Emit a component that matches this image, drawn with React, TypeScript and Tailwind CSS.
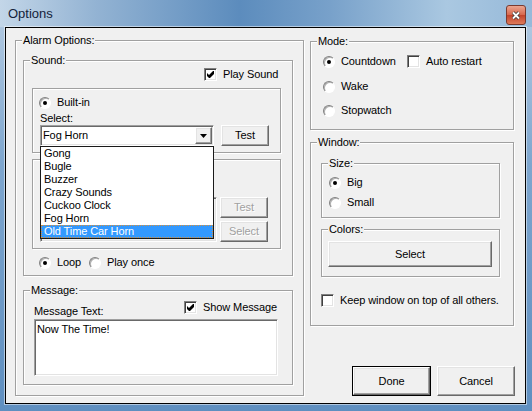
import React from "react";

// classic Win32 edge styles
const etched = "border border-[#a0a0a0] shadow-[inset_1px_1px_0_#fff,1px_1px_0_#fff]";
const raised =
  "border border-t-white border-l-white border-r-[#696969] border-b-[#696969] bg-[#f0f0f0] shadow-[inset_-1px_-1px_0_#a0a0a0,inset_1px_1px_0_#e3e3e3]";
const sunken =
  "border border-t-[#a0a0a0] border-l-[#a0a0a0] border-r-white border-b-white shadow-[inset_1px_1px_0_#696969,inset_-1px_-1px_0_#e3e3e3]";

const SOUNDS = ["Gong", "Bugle", "Buzzer", "Crazy Sounds", "Cuckoo Clock", "Fog Horn", "Old Time Car Horn"];

function Group({ label, className = "", children }: { label?: string; className?: string; children?: React.ReactNode }) {
  return (
    <div className={`relative shrink-0 ${etched} ${className}`}>
      {label && (
        <span className="absolute left-[6px] top-[-8px] bg-[#f0f0f0] px-[1px] leading-[14px]">{label}</span>
      )}
      {children}
    </div>
  );
}

function Radio({ checked = false }: { checked?: boolean }) {
  return (
    <span className="relative block h-[12px] w-[12px] shrink-0 rounded-full border border-[#808080] border-b-white border-r-white bg-white shadow-[inset_1px_1px_0_#b0b0b0]">
      {checked && <span className="absolute left-[3px] top-[3px] h-[4px] w-[4px] rounded-full bg-black" />}
    </span>
  );
}

function Check({ checked = false }: { checked?: boolean }) {
  return (
    <span className="flex h-[13px] w-[13px] shrink-0 items-center justify-center border border-[#808080] border-b-white border-r-white bg-white shadow-[inset_1px_1px_0_#404040,inset_-1px_-1px_0_#e3e3e3]">
      {checked && (
        <svg width="7" height="7" viewBox="0 0 7 7">
          <polygon points="0,2 2,4 6,0 7,0 7,3 3,7 2,7 0,5" fill="#000" />
        </svg>
      )}
    </span>
  );
}

function Btn({
  children,
  className = "",
  disabled = false,
}: {
  children: React.ReactNode;
  className?: string;
  disabled?: boolean;
}) {
  return (
    <div
      className={`flex shrink-0 items-center justify-center ${raised} ${className} ${
        disabled ? "text-[#a0a0a0] [text-shadow:1px_1px_0_#fff]" : ""
      }`}
    >
      {children}
    </div>
  );
}

function Option({ label, checked, radio }: { label: string; checked?: boolean; radio?: boolean }) {
  return (
    <div className="flex h-[13px] items-center gap-[6px]">
      {radio ? <Radio checked={checked} /> : <Check checked={checked} />}
      <span className="whitespace-nowrap">{label}</span>
    </div>
  );
}

export default function App() {
  return (
    <div className="h-[411px] w-[532px] overflow-hidden bg-[linear-gradient(180deg,#b7cde3,#7ea6ce_40%,#5f8fc0)] font-['Liberation_Sans',Arial,sans-serif] text-[11px] leading-[13px] tracking-[-0.1px] text-black">
      {/* title bar */}
      <div className="flex h-[27px] items-start bg-[linear-gradient(90deg,#c3d6e8,#93b3d3_18%,#5c8cbd_45%,#78a1ca_62%,#aac8e1_84%,#96b9d9)]">
        <span className="ml-[8px] mt-[6px] text-[13px] leading-[16px] tracking-normal text-[#14223a]">Options</span>
        <div className="ml-auto mr-[6px] mt-[5px] flex h-[20px] w-[20px] items-center justify-center rounded-[3px] border border-[#7a3b30] bg-[linear-gradient(180deg,#eba58f,#d8694f_48%,#c2432b_52%,#de7a5a)]">
          <svg width="10" height="9" viewBox="0 0 10 9">
            <path d="M2 1.5 L8 7.5 M8 1.5 L2 7.5" stroke="#3b3b3b" strokeWidth="3.4" />
            <path d="M2 1.5 L8 7.5 M8 1.5 L2 7.5" stroke="#fff" strokeWidth="1.8" />
          </svg>
        </div>
      </div>

      {/* client area */}
      <div className="ml-[5px] flex h-[377px] w-[521px] border border-black bg-[#f0f0f0] shadow-[0_0_0_1px_rgba(255,255,255,0.5)]">
        {/* left column */}
        <div className="ml-[9px] mt-[12px] w-[289px] shrink-0">
          <Group label="Alarm Options:" className="h-[356px] w-[289px]">
            <Group label="Sound:" className="ml-[7px] mt-[19px] h-[216px] w-[270px]">
              <div className="ml-[180px] mt-[7px]">
                <Option label="Play Sound" checked />
              </div>

              {/* built-in */}
              <Group className="ml-[8px] mt-[7px] h-[65px] w-[249px]">
                <div className="ml-[6px] mt-[7px]">
                  <Option label="Built-in" radio checked />
                </div>
                <div className="ml-[7px] mt-[3px] h-[13px]">Select:</div>
                <div className="ml-[7px] flex">
                  <div className={`flex h-[21px] w-[174px] items-center bg-white ${sunken}`}>
                    <span className="flex-1 pl-[2px]">Fog Horn</span>
                    <div className={`mr-[1px] flex h-[17px] w-[17px] items-center justify-center ${raised}`}>
                      <svg width="7" height="4" viewBox="0 0 7 4">
                        <polygon points="0,0 7,0 3.5,4" fill="#000" />
                      </svg>
                    </div>
                  </div>
                  <Btn className="ml-[7px] h-[21px] w-[48px]">Test</Btn>
                </div>

                {/* open dropdown list */}
                <div className="absolute left-[7px] top-[57px] z-10 w-[174px] border border-[#1a1a1a] bg-white">
                  {SOUNDS.map((s, i) =>
                    i === SOUNDS.length - 1 ? (
                      <div
                        key={s}
                        className="h-[13px] border border-dotted border-[#d8903a] bg-[#3399ff] pl-[2px] leading-[11px] text-white"
                      >
                        {s}
                      </div>
                    ) : (
                      <div key={s} className="h-[13px] pl-[3px] leading-[13px]">
                        {s}
                      </div>
                    )
                  )}
                </div>
              </Group>

              {/* custom file box (mostly hidden by the list) */}
              <Group className="ml-[8px] mt-[6px] h-[90px] w-[249px]">
                <div className="mt-[37px] flex">
                  <div className={`ml-[7px] h-[45px] w-[177px] bg-[#f0f0f0] ${sunken}`} />
                  <div className="ml-[3px] flex flex-col gap-[3px]">
                    <Btn disabled className="h-[21px] w-[48px]">
                      Test
                    </Btn>
                    <Btn disabled className="h-[21px] w-[48px]">
                      Select
                    </Btn>
                  </div>
                </div>
              </Group>

              <div className="ml-[15px] mt-[7px] flex">
                <div className="w-[50px]">
                  <Option label="Loop" radio checked />
                </div>
                <Option label="Play once" radio />
              </div>
            </Group>

            <Group label="Message:" className="ml-[7px] mt-[14px] h-[95px] w-[270px]">
              <div className="mt-[10px] flex">
                <div className="w-[160px] pl-[10px] pt-[4px]">Message Text:</div>
                <Option label="Show Message" checked />
              </div>
              <div className={`ml-[10px] mt-[1px] h-[57px] w-[244px] bg-white pl-[2px] pt-[3px] ${sunken}`}>
                Now The Time!
              </div>
            </Group>
          </Group>
        </div>

        {/* right column */}
        <div className="ml-[6px] mt-[13px] w-[205px] shrink-0">
          <Group label="Mode:" className="h-[89px] w-[204px]">
            <div className="ml-[12px] mt-[13px] flex">
              <div className="w-[84px]">
                <Option label="Countdown" radio checked />
              </div>
              <Option label="Auto restart" />
            </div>
            <div className="ml-[12px] mt-[12px]">
              <Option label="Wake" radio />
            </div>
            <div className="ml-[12px] mt-[11px]">
              <Option label="Stopwatch" radio />
            </div>
          </Group>

          <Group label="Window:" className="mt-[12px] h-[184px] w-[204px]">
            <Group label="Size:" className="ml-[10px] mt-[20px] h-[55px] w-[179px]">
              <div className="ml-[7px] mt-[12px]">
                <Option label="Big" radio checked />
              </div>
              <div className="ml-[7px] mt-[7px]">
                <Option label="Small" radio />
              </div>
            </Group>
            <Group label="Colors:" className="ml-[10px] mt-[11px] h-[48px] w-[179px]">
              <Btn className="ml-[6px] mt-[11px] h-[26px] w-[164px]">Select</Btn>
            </Group>
            <div className="ml-[10px] mt-[17px]">
              <Option label="Keep window on top of all others." />
            </div>
          </Group>

          <div className="mt-[40px] flex">
            <div className="ml-[42px] h-[30px] w-[79px] border border-black">
              <Btn className="h-full w-full">Done</Btn>
            </div>
            <Btn className="ml-[6px] h-[30px] w-[78px]">Cancel</Btn>
          </div>
        </div>
      </div>
    </div>
  );
}
